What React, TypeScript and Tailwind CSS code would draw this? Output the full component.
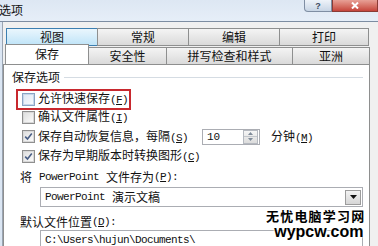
import React from "react";

const cjk = "font-['Noto_Sans_CJK_SC','Noto_Sans',sans-serif]";
const mono = "font-['Liberation_Mono','Noto_Sans_CJK_SC',monospace]";

const Check: React.FC<{ checked?: boolean; hot?: boolean }> = ({ checked, hot }) => (
  <span
    className={`flex h-[13px] w-[13px] shrink-0 items-center justify-center border ${
      hot ? "border-[#8aa4c4]" : "border-[#8f8f8f]"
    } bg-white`}
  >
    <span
      className={`flex h-[11px] w-[11px] items-center justify-center border ${
        hot ? "border-[#c6d7ea] bg-gradient-to-br from-[#dfe9f5] to-[#f6f9fc]" : "border-[#d8d8d8] bg-gradient-to-br from-[#e0e0e0] to-[#fafafa]"
      }`}
    >
      {checked && (
        <svg width="9" height="9" viewBox="0 0 9 9">
          <path d="M1.2 4.6 L3.5 7 L7.8 1.6" fill="none" stroke="#4a5f86" strokeWidth="1.6" />
        </svg>
      )}
    </span>
  </span>
);

const Key: React.FC<{ k: string; tail?: string }> = ({ k, tail = "" }) => (
  <span className={`${mono} text-[11px] tracking-[-0.6px]`}>
    (<span className="underline">{k}</span>){tail}
  </span>
);

const Tab: React.FC<{ label: string; w: string; hot?: boolean }> = ({ label, w, hot }) => (
  <div
    className={`${w} -ml-px flex h-[18px] items-center justify-center border ${
      hot
        ? "border-[#3c7fb1] bg-gradient-to-b from-[#eaf6fd] to-[#bfe4f8]"
        : "border-[#8e8f8f] bg-gradient-to-b from-[#f4f4f4] to-[#dadada]"
    } text-[12px] leading-none text-[#111]`}
  >
    {label}
  </div>
);

export default function App() {
  return (
    <div className={`${cjk} relative h-[246px] w-[378px] overflow-hidden bg-[#dbe6f3] text-[#111]`}>
      {/* title bar */}
      <div className="flex h-[22px] items-start justify-between border-b border-[#7d8da2] bg-gradient-to-b from-[#dde7f3] to-[#e6eef8]">
        <span className="-ml-px mt-[3px] text-[12px] leading-[14px]">选项</span>
        <div className="flex">
          <div className="flex h-[12px] w-[28px] items-center justify-center rounded-bl-[4px] border border-t-0 border-[#7f8ea3] bg-gradient-to-b from-[#eef3f9] to-[#c8d5e5] font-['Liberation_Sans',sans-serif] text-[9px] font-bold leading-[10px] text-[#3d4b61]">
            ?
          </div>
          <div className="flex h-[12px] w-[46px] items-center justify-center border border-t-0 border-[#8a3b36] bg-gradient-to-b from-[#e7a096] to-[#c5443b]">
            <svg width="8" height="7" viewBox="0 0 8 7">
              <path d="M1 0.5 L7 6.5 M7 0.5 L1 6.5" stroke="white" strokeWidth="2" />
            </svg>
          </div>
        </div>
      </div>

      {/* client area */}
      <div className="ml-[2px] h-[224px] border-l border-[#9aa5b3] bg-[#f0f0f0] pt-[6px]">
        {/* back row of tabs */}
        <div className="flex pl-[4px]">
          <Tab label="视图" w="w-[92px]" hot />
          <Tab label="常规" w="w-[92px]" />
          <Tab label="编辑" w="w-[92px]" />
          <Tab label="打印" w="w-[90px]" />
        </div>

        {/* front row of tabs */}
        <div className="relative z-10 flex h-[18px] items-end pl-[2px]">
          <div className="flex h-[20px] w-[84px] items-center justify-center border border-b-0 border-[#8e8f8f] bg-white pb-[2px] text-[12px] leading-none">
            保存
          </div>
          <div className="-ml-px flex h-[17px] w-[79px] items-center justify-center border border-b-0 border-[#8e8f8f] bg-gradient-to-b from-[#f4f4f4] to-[#dadada] text-[12px] leading-none">
            安全性
          </div>
          <div className="-ml-px flex h-[17px] w-[127px] items-center justify-center border border-b-0 border-[#8e8f8f] bg-gradient-to-b from-[#f4f4f4] to-[#dadada] text-[12px] leading-none">
            拼写检查和样式
          </div>
          <div className="-ml-px flex h-[17px] w-[78px] items-center justify-center border border-b-0 border-[#8e8f8f] bg-gradient-to-b from-[#f4f4f4] to-[#dadada] text-[12px] leading-none">
            亚洲
          </div>
        </div>

        {/* tab page */}
        <div className="h-[200px] w-[367px] border border-[#8e8f8f] bg-white text-[12px] leading-[14px]">
          <div className="mt-[5px] flex h-[14px] items-center pl-[8px] pr-[6px]">
            <span>保存选项</span>
            <span className="ml-[4px] h-px flex-1 bg-[#d5dce3]" />
          </div>

          <div className="ml-[12px] mt-[5px] w-[115px] border-2 border-[#c8282e]">
            <div className="flex h-[17px] items-center pb-px pl-[4px]">
              <Check hot />
              <span className="ml-[3px] whitespace-nowrap">
                允许快速保存<Key k="F" />
              </span>
            </div>
          </div>

          <div className="-mt-px flex h-[16px] items-center pl-[18px]">
            <Check />
            <span className="ml-[3px]">
              确认文件属性<Key k="I" />
            </span>
          </div>

          <div className="mt-[2px] flex h-[19px] items-center pl-[18px]">
            <Check checked />
            <span className="ml-[3px] w-[164px]">
              保存自动恢复信息，每隔<Key k="S" />
            </span>
            <div className="flex h-[16px] w-[58px] items-center border border-[#abadb3] bg-white pl-[4px] pr-px">
              <span className={`${mono} flex-1 text-[11px]`}>10</span>
              <div className="flex h-[14px] w-[15px] flex-col border border-[#b5b9c0] bg-gradient-to-b from-[#f6f6f6] to-[#dcdcdc]">
                <div className="flex flex-1 items-center justify-center border-b border-[#c3c7cc]">
                  <svg width="5" height="3" viewBox="0 0 5 3">
                    <path d="M0 3 L2.5 0 L5 3 Z" fill="#7e8a99" />
                  </svg>
                </div>
                <div className="flex flex-1 items-center justify-center">
                  <svg width="5" height="3" viewBox="0 0 5 3">
                    <path d="M0 0 L2.5 3 L5 0 Z" fill="#7e8a99" />
                  </svg>
                </div>
              </div>
            </div>
            <span className="ml-[11px]">
              分钟<Key k="M" />
            </span>
          </div>

          <div className="mt-px flex h-[18px] items-center pl-[18px]">
            <Check checked />
            <span className="ml-[3px] whitespace-nowrap">
              保存为早期版本时转换图形<Key k="C" />
            </span>
          </div>

          <div className="mt-[5px] flex h-[14px] items-center whitespace-nowrap pl-[16px]">
            <span>将</span>
            <span className={`${mono} ml-[7px] text-[11px] tracking-[-0.6px]`}>PowerPoint</span>
            <span className="ml-[7px]">文件存为</span>
            <Key k="P" tail=":" />
          </div>

          <div className="ml-[36px] mr-[6px] mt-[3px] flex h-[20px] items-center border border-[#abadb3] bg-white pl-[4px] pr-px">
            <span className={`${mono} text-[11px] tracking-[-0.6px]`}>PowerPoint</span>
            <span className="ml-[7px] flex-1">演示文稿</span>
            <div className="flex h-[15px] w-[16px] items-center justify-center border border-[#9c9c9c] bg-gradient-to-b from-[#f3f3f3] to-[#d6d6d6]">
              <svg width="7" height="4" viewBox="0 0 7 4">
                <path d="M0 0 L3.5 4 L7 0 Z" fill="#111" />
              </svg>
            </div>
          </div>

          <div className="mt-[8px] flex h-[14px] items-center whitespace-nowrap pl-[16px]">
            <span>默认文件位置</span>
            <Key k="D" tail=":" />
          </div>

          <div className="ml-[36px] mr-[6px] mt-px flex h-[20px] items-center border border-[#abadb3] bg-white pl-[4px]">
            <span className={`${mono} text-[11px] tracking-[-0.6px]`}>C:\Users\hujun\Documents\</span>
          </div>
        </div>
      </div>

      {/* watermark */}
      <div className="absolute left-[266px] top-[207px] flex flex-col items-end text-black [text-shadow:0_0_2px_white,0_0_2px_white,0_0_2px_white]">
        <span className="text-[13px] font-bold leading-[17px] tracking-[1.2px]">无忧电脑学习网</span>
        <span className="mr-[2px] font-['Liberation_Sans',sans-serif] text-[16px] font-bold leading-[16px]">wypcw.com</span>
      </div>
    </div>
  );
}
